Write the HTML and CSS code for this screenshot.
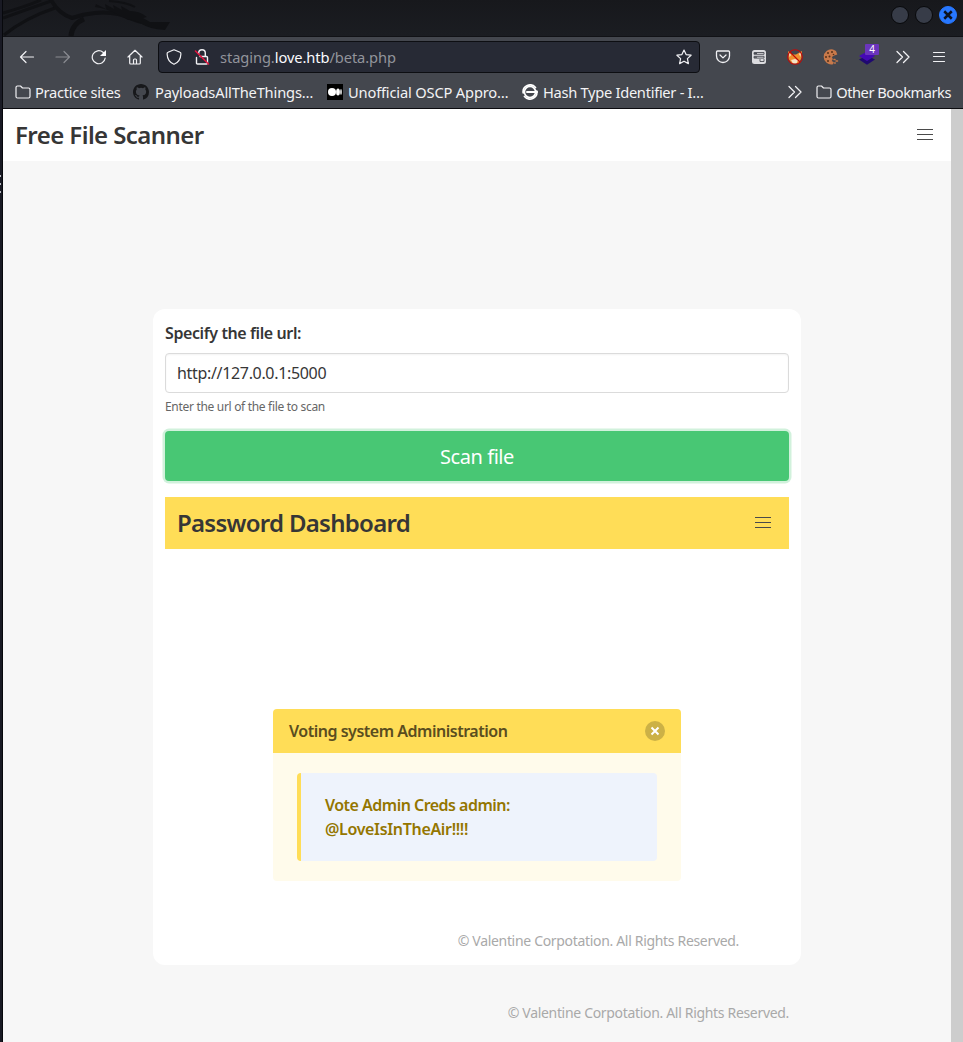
FILE: index.html
```
<!DOCTYPE html>
<html lang="en">
<head>
<meta charset="utf-8">
<title>Free File Scanner</title>
<link rel="stylesheet" href="styles.css">
</head>
<body>
<div class="desktop">
  <div class="edge"><i class="edge-mark"></i><i class="edge-mark"></i><i class="edge-mark"></i></div>
  <div class="window">
    <div class="titlebar">
      <svg class="dragon" width="170" height="37" viewBox="3 0 170 37" fill="none" stroke="#101114">
        <path d="M3 13Q25 7 41 0M3 18Q28 9 51 1M4 35Q25 18 55 8" stroke-width="3"/>
        <path d="M51 0Q59 14 72 18Q83 14 95 13Q116 11 132 19Q139 22 146 23" stroke-width="4"/>
        <path d="M71 36Q72 24 84 19" stroke-width="5"/>
        <path d="M96 4l10 5-1-5 9 5-1-4 9 5-1-4 9 5q10 0 17 6l-4 1 7 4 6 0 14 0-5 8q-16-1-23-6-9-5-14-4l-7-4q-15-8-26-9z" fill="#101114" stroke="none"/>
        <path d="M109 1Q126 2 135 7" stroke-width="2"/>
      </svg>
      <div class="controls">
        <span class="dot"></span><span class="dot"></span>
        <span class="dot dot-close"><svg width="10" height="10" viewBox="0 0 8 8"><path d="M1 1l6 6M7 1L1 7" stroke="#0c1220" stroke-width="2"/></svg></span>
      </div>
    </div>
    <div class="toolbar">
      <svg class="ic" viewBox="0 0 16 16"><path d="M14.500 8H1.500M7 2.500L1.500 8L7 13.500"/></svg>
      <svg class="ic ic-off" viewBox="0 0 16 16"><path d="M1 8h13.500M9 2.500L14.500 8L9 13.500"/></svg>
      <svg class="ic" viewBox="0 0 16 16"><path d="M14.200 9A6.500 6.500 0 1 1 12 3.300L14 5"/><path d="M15 1v6H9z" fill="#fbfbfe" stroke="none"/></svg>
      <svg class="ic" viewBox="0 0 16 16"><path d="M1 8L8 1.300L15 8M2.700 7v7q0 1 1 1h8.600q1 0 1-1V7M6.500 15v-4q0-1 1-1h1q1 0 1 1v4"/></svg>
      <div class="urlbar">
        <svg class="ic" viewBox="0 0 16 16"><path d="M8 .8L14 3.200Q15 3.500 14.900 5C14.700 9.500 12.500 13.500 8 15.300C3.500 13.500 1.300 9.500 1.100 5Q1 3.500 2 3.200z"/></svg>
        <svg class="ic" viewBox="0 0 16 16"><path d="M4.700 4.500V4a3.300 3.300 0 0 1 6.600 0v3M6 7.500h6.500q1 0 1 1V14q0 1-1 1H3.500q-1 0-1-1V8.500" stroke-width="1.400"/><path d="M1.500 2l13 13" stroke="#e2143f" stroke-width="1.600"/></svg>
        <span class="url">staging.<b>love.htb</b>/beta.php</span>
        <svg class="ic star" viewBox="0 0 16 16"><path d="M8 1l2.100 4.600 5 .6-3.700 3.400 1 5L8 12.200l-4.400 2.400 1-5L.9 6.200l5-.6z"/></svg>
      </div>
      <div class="addons">
        <svg class="ic" viewBox="0 0 16 16"><path d="M2.500 2h11q1 0 1 1V7a6.500 6.500 0 0 1-13 0V3q0-1 1-1zM5 6L8 8.900 11 6" stroke-width="1.300"/></svg>
        <svg class="ic" viewBox="0 0 16 16"><rect x="1" y="1" width="14" height="14" rx="2.500" fill="#dcdcdf" stroke="none"/><path d="M3.500 3.500h9.500v1.800H3.500zM3.500 7.300h9.500v1.800H3.500zM9 10.500v2h4v-2" stroke="#484b52" stroke-width=".9"/><path d="M3.500 4.400h2M3.500 8.200h2" stroke="#484b52"/></svg>
        <svg class="ic" viewBox="0 0 16 16"><path d="M1 2l4 3.500h4L15 2l-.5 7-3 5.500H5L1.500 10z" fill="#f0902e" stroke="none"/><path d="M2 3l2 3-1.500 2zM14 3l-2 2 1.500 3zM4 11l4-1 3 1-1.500 3.500H6z" fill="#f6e3c8" stroke="none"/><circle cx="8" cy="8" r="7.300" stroke="#c00a0a" stroke-width="1.100"/><path d="M3 3l10 10" stroke="#c00a0a" stroke-width="1.100"/></svg>
        <svg class="ic" viewBox="0 0 16 16"><path d="M10 .5A7.600 7.600 0 1 0 10 15.300l.8-2-2-1.300 1-2-1-2 2.500-1.500 3-1L13 2z" fill="#c8794a" stroke="none"/><g fill="#573019" stroke="none"><circle cx="5" cy="4" r="1"/><circle cx="9" cy="3" r="1"/><circle cx="3" cy="8" r="1"/><circle cx="6.500" cy="7.500" r="1"/><circle cx="5" cy="12" r="1"/><circle cx="10.500" cy="5.500" r=".8"/></g><path d="M11 10.500h1M13 12h1.500M11.500 14h.8" stroke="#c8794a" stroke-width="1.500"/></svg>
        <span class="badged"><svg class="ic" viewBox="0 0 16 16"><path d="M0 10.500l8-4 8 4-8 5.300z" fill="#1f0970" stroke="none"/><path d="M0 7l8-4.500L16 7l-8 5z" fill="#4509b5" stroke="none"/></svg><span class="badge">4</span></span>
        <svg class="ic" viewBox="0 0 16 16"><path d="M2 2.500L7.500 8 2 13.500M8.500 2.500L14 8l-5.500 5.500" stroke-width="1.300"/></svg>
        <svg class="ic" viewBox="0 0 16 16"><path d="M2.500 3.500h11M2.500 7.500h11M2.500 12.500h11" stroke-width="1.200"/></svg>
      </div>
    </div>
    <div class="bookmarks">
      <div class="bm bm-practice"><svg class="ic" viewBox="0 0 16 16"><path d="M1 12.500V3.500q0-1.500 1.500-1.500H5.500l2 2H13.500q1.500 0 1.500 1.500v7q0 1.500-1.500 1.500H2.500Q1 14 1 12.500z"/></svg><span>Practice sites</span></div>
      <div class="bm bm-payloads"><svg class="ic" viewBox="0 0 16 16"><path d="M8 0C3.580 0 0 3.580 0 8c0 3.540 2.290 6.530 5.470 7.590.4.070.55-.17.55-.38V13.720c-2.010.37-2.530-.49-2.690-.94-.09-.23-.48-.94-.82-1.130-.28-.15-.68-.52-.01-.53.63-.01 1.080.58 1.230.82.720 1.210 1.870.87 2.330.66.070-.52.280-.87.510-1.070-1.780-.2-3.640-.89-3.640-3.950 0-.87.310-1.590.82-2.150-.08-.2-.36-1.020.08-2.120 0 0 .67-.21 2.200.82a7.600 7.600 0 0 1 4 0c1.530-1.040 2.200-.82 2.200-.82.440 1.100.160 1.920.080 2.120.510.560.82 1.270.82 2.150 0 3.070-1.870 3.750-3.650 3.950.290.250.540.730.540 1.480v2.200c0 .210.150.460.550.380A8 8 0 0 0 16 8c0-4.420-3.580-8-8-8z" fill="#17181b" stroke="none"/></svg><span>PayloadsAllTheThings…</span></div>
      <div class="bm bm-oscp"><svg class="ic" viewBox="0 0 16 16"><path d="M0 0h16v16H0z" fill="#000" stroke="none"/><g fill="#fff" stroke="none"><circle cx="5" cy="8" r="4"/><ellipse cx="11" cy="8" rx="1.900" ry="3.600"/><ellipse cx="14" cy="8" rx=".8" ry="3"/></g></svg><span>Unofficial OSCP Appro…</span></div>
      <div class="bm bm-hash"><svg class="ic" viewBox="0 0 16 16"><path d="M13.500 3.500A7 7 0 0 0 1.200 9M2.500 12.500A7 7 0 0 0 14.800 7" stroke="#fff" stroke-width="1.700"/><circle cx="8" cy="8" r="5.600" stroke="#fff" stroke-width="1.700"/><path d="M5 8h10" stroke="#fff" stroke-width="2"/></svg><span>Hash Type Identifier - I…</span></div>
      <div class="bm-end">
        <svg class="ic" viewBox="0 0 16 16"><path d="M2 2.500L7.500 8 2 13.500M8.500 2.500L14 8l-5.500 5.500" stroke-width="1.300"/></svg>
        <div class="bm bm-other"><svg class="ic" viewBox="0 0 16 16"><path d="M1 12.500V3.500q0-1.500 1.500-1.500H5.500l2 2H13.500q1.500 0 1.500 1.500v7q0 1.500-1.500 1.500H2.500Q1 14 1 12.500z"/></svg><span>Other Bookmarks</span></div>
      </div>
    </div>
    <div class="viewport">
      <div class="page">
        <nav class="navbar"><h1 class="brand">Free File Scanner</h1><span class="burger"><i></i><i></i><i></i></span></nav>
        <main class="card">
          <label class="label" for="file"><span>Specify the file url:</span></label>
          <input class="input" id="file" type="text" value="http://127.0.0.1:5000">
          <p class="help"><span>Enter the url of the file to scan</span></p>
          <button class="scan"><span>Scan file</span></button>
          <nav class="navbar navbar-warning"><h2 class="brand brand-dash">Password Dashboard</h2><span class="burger"><i></i><i></i><i></i></span></nav>
          <article class="message">
            <header class="message-head"><span>Voting system Administration</span>
              <span class="delete"><svg width="10" height="10" viewBox="0 0 10 10"><path d="M1.500 1.500l7 7M8.500 1.500l-7 7" stroke="#fff" stroke-width="2"/></svg></span></header>
            <div class="message-body"><div class="creds"><span class="creds-user">Vote Admin Creds admin:</span><br><span class="creds-pass">@LoveIsInTheAir!!!!</span></div></div>
          </article>
          <p class="copy copy-inner">© Valentine Corpotation. All Rights Reserved.</p>
        </main>
        <footer class="footer"><p class="copy">© Valentine Corpotation. All Rights Reserved.</p></footer>
      </div>
      <div class="scrollbar"></div>
    </div>
  </div>
</div>
</body>
</html>
```
FILE: styles.css
```
* { box-sizing: border-box; }
body { margin: 0; font-family: "Noto Sans", sans-serif; color: #363636; overflow: hidden; }
h1, h2, p { margin: 0; }
.desktop { display: flex; width: 963px; height: 1042px; background: #14151d; }
.edge { width: 3px; flex: none; border-right: 1px solid #07080c; background: #191a24; padding-top: 175px; display: flex; flex-direction: column; gap: 6px; }
.edge-mark { width: 1px; height: 2px; background: #b9bbc2; }
.window { flex: 1; display: flex; flex-direction: column; min-width: 0; }
.titlebar { height: 37px; background: linear-gradient(#17181c, #1b1d22); border-bottom: 1px solid #111216; display: flex; justify-content: space-between; }
.controls { display: flex; gap: 6px; padding: 6px 6px 0 0; }
.dot { width: 18px; height: 18px; border-radius: 50%; background: #373c48; border: 1px solid #08090b; }
.dot-close { background: #2777ff; border-color: #2777ff; display: flex; align-items: center; justify-content: center; }
.toolbar { height: 40px; background: #44474e; display: flex; align-items: center; padding-left: 16px; gap: 20px; }
.ic { width: 16px; height: 16px; flex: none; display: block; fill: none; stroke: #f1f1f4; stroke-width: 1.2; stroke-linejoin: round; stroke-linecap: round; }
.ic-off { opacity: .4; }
.urlbar { width: 542px; height: 32px; margin-left: -5px; background: #272a35; border: 1px solid #0d0e12; border-radius: 4px; display: flex; align-items: center; padding: 0 7px; gap: 12px; }
.url { font-size: 14.67px; letter-spacing: -.08px; color: #92949b; margin-left: -2px; white-space: nowrap; }
.url b { font-weight: 400; color: #fbfbfe; }
.star { margin-left: auto; }
.addons { display: flex; gap: 20px; margin-left: -5px; }
.badged { position: relative; }
.badge { position: absolute; left: 6px; top: -5px; width: 14px; height: 11px; border-radius: 1px; background: #6b35bd; color: #fff; font-size: 10px; line-height: 11px; text-align: center; }
.bookmarks { height: 32px; background: #44474e; border-bottom: 1px solid #0c0c10; display: flex; align-items: center; padding: 0 12px 1px; font-size: 14.67px; color: #f3f3f5; }
.bm { display: flex; align-items: center; gap: 4px; white-space: nowrap; }
.bm-practice { width: 118px; letter-spacing: -.28px; }
.bm-payloads { width: 194px; gap: 6px; letter-spacing: -.16px; }
.bm-oscp { width: 195px; gap: 5px; letter-spacing: -.17px; }
.bm-hash { gap: 5px; letter-spacing: -.29px; }
.bm-other { letter-spacing: -.47px; }
.bm-end { margin-left: auto; display: flex; gap: 13px; align-items: center; }
.viewport { flex: 1; display: flex; }
.page { width: 948px; background: #f7f7f7; }
.scrollbar { width: 12px; background: #cdcdcd; }
.navbar { height: 52px; background: #fff; display: flex; align-items: center; justify-content: space-between; padding: 0 18px 0 12px; }
.navbar-warning { background: #ffdd57; margin-top: 16px; }
.brand { font-size: 24px; line-height: 36px; font-weight: 600; letter-spacing: -.57px; white-space: nowrap; }
.brand-dash { letter-spacing: -.72px; }
.burger { width: 16px; display: flex; flex-direction: column; gap: 4px; margin-top: -1px; }
.burger i { height: 1px; background: #4a4a4a; }
.card { width: 648px; height: 656px; margin: 148px 0 0 150px; background: #fff; border-radius: 12px; padding: 12px; }
.label { display: block; font-size: 16px; line-height: 24px; font-weight: 600; letter-spacing: -.4px; margin-bottom: 8px; }
.input { display: block; width: 100%; height: 40px; border: 1px solid #dbdbdb; border-radius: 4px; padding: 0 11px; font: 16px "Noto Sans", sans-serif; letter-spacing: -.33px; color: #363636; box-shadow: inset 0 1px 2px rgba(10,10,10,.05); }
.help { font-size: 12px; line-height: 18px; letter-spacing: -.31px; margin: 5px 0 15px; color: #666; }
.scan { display: block; width: 100%; height: 50px; border: 0; border-radius: 4px; background: #48c774; box-shadow: 0 0 0 2.5px rgba(72,199,116,.25); color: #fff; font: 20px "Noto Sans", sans-serif; letter-spacing: -.44px; }
.message { width: 408px; margin: 160px 0 0 108px; font-size: 16px; line-height: 24px; font-weight: 600; letter-spacing: -.48px; }
.message-head { height: 44px; background: #ffdd57; border-radius: 4px 4px 0 0; display: flex; align-items: center; justify-content: space-between; padding: 0 16px; color: #5a4d1f; }
.delete { width: 20px; height: 20px; border-radius: 50%; background: #ccb146; display: flex; align-items: center; justify-content: center; }
.message-body { height: 128px; background: #fffbeb; border-radius: 0 0 4px 4px; padding: 20px 24px; }
.creds { height: 88px; background: #eef3fc; border-left: 4px solid #ffdd57; border-radius: 4px; padding: 20px 24px; color: #947600; }
.creds-user { letter-spacing: -.52px; }
.creds-pass { letter-spacing: -.33px; }
.copy { font-size: 14px; line-height: 24px; letter-spacing: -.32px; text-align: right; color: #a9a9a9; white-space: nowrap; }
.copy-inner { margin: 48px 50px 0 0; }
.footer { padding: 36px 162px 0 0; }
```
